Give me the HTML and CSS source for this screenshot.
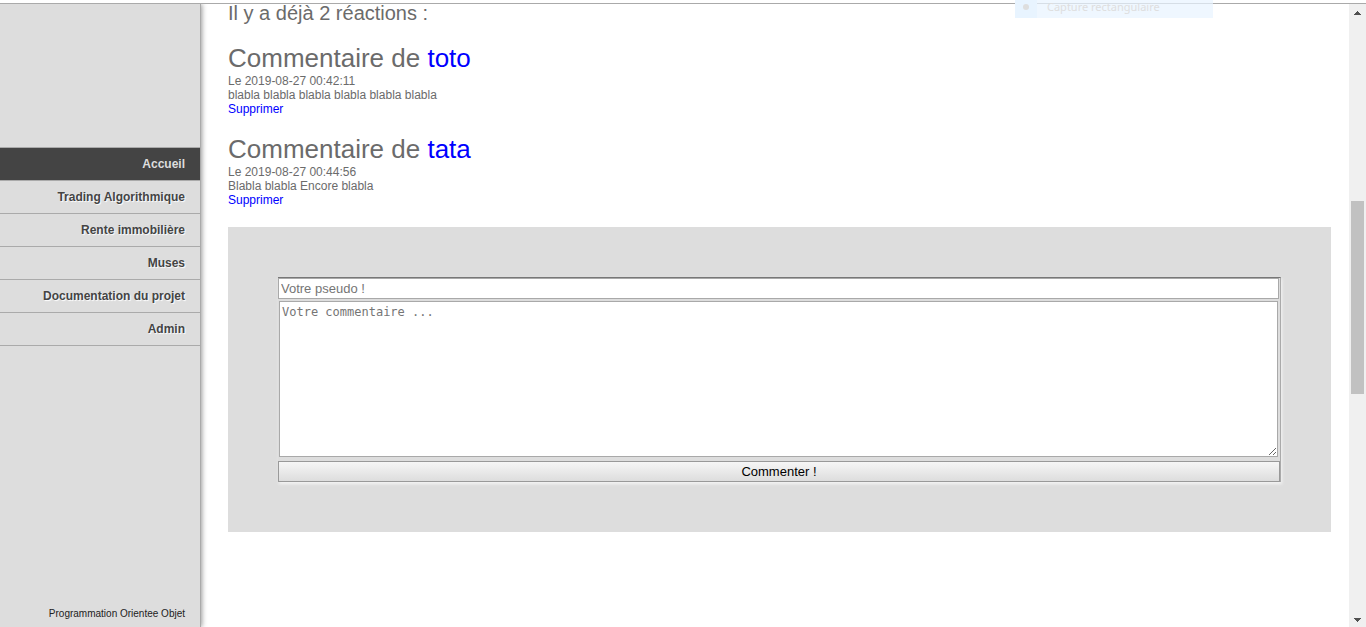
FILE: index.html
```html
<!DOCTYPE html>
<html lang="fr">
<head>
<meta charset="utf-8">
<title>Programmation Orientee Objet</title>
<link rel="stylesheet" href="styles.css">
</head>
<body>
<div class="top-line"></div>
<div class="page">
  <aside class="sidebar">
    <nav class="menu">
      <a class="menu-item active" href="#accueil">Accueil</a>
      <a class="menu-item" href="#trading">Trading Algorithmique</a>
      <a class="menu-item" href="#rente">Rente immobilière</a>
      <a class="menu-item" href="#muses">Muses</a>
      <a class="menu-item" href="#documentation">Documentation du projet</a>
      <a class="menu-item" href="#admin">Admin</a>
    </nav>
    <p class="sidebar-footer">Programmation Orientee Objet</p>
  </aside>
  <main class="content">
    <h2 class="count">Il y a déjà 2 réactions :</h2>
    <article class="comment">
      <h3 class="comment-title">Commentaire de <a href="#toto">toto</a></h3>
      <p>Le 2019-08-27 00:42:11</p>
      <p>blabla blabla blabla blabla blabla blabla</p>
      <p><a href="#supprimer-1">Supprimer</a></p>
    </article>
    <article class="comment">
      <h3 class="comment-title">Commentaire de <a href="#tata">tata</a></h3>
      <p>Le 2019-08-27 00:44:56</p>
      <p>Blabla blabla Encore blabla</p>
      <p><a href="#supprimer-2">Supprimer</a></p>
    </article>
    <section class="form-panel">
      <form class="comment-form">
        <input class="pseudo" type="text" placeholder="Votre pseudo !" aria-label="Votre pseudo">
        <textarea class="message" placeholder="Votre commentaire ..." aria-label="Votre commentaire"></textarea>
        <button class="submit" type="button">Commenter !</button>
      </form>
    </section>
  </main>
  <div class="scrollbar">
    <svg class="arrow" viewBox="0 0 17 17" shape-rendering="crispEdges"><path d="M8 7h1v1h1v1h1v1h1v1H5v-1h1V9h1V8h1z"/></svg>
    <div class="track"><div class="thumb"></div></div>
    <svg class="arrow" viewBox="0 0 17 17" shape-rendering="crispEdges"><path d="M5 8h7v1h-1v1h-1v1H9v1H8v-1H7v-1H6V9H5z"/></svg>
  </div>
</div>
<div class="capture-hint"><span class="capture-icon"><span class="dot"></span></span><span class="capture-label">Capture rectangulaire</span></div>
</body>
</html>
```
FILE: styles.css
```css
* {
  box-sizing: border-box;
}

body {
  margin: 0;
  height: 100vh;
  display: flex;
  flex-direction: column;
  overflow: hidden;
  background: #fff;
  color: #6b6b6b;
  font: 12px/14px "Liberation Sans", Arial, sans-serif;
}

h2, h3, p {
  margin: 0;
  font-weight: normal;
}

a {
  color: #00f;
  text-decoration: none;
}

.top-line {
  flex: none;
  height: 4px;
  border-bottom: 1px solid #aaa;
}

.page {
  flex: 1;
  min-height: 0;
  display: flex;
  overflow: hidden;
}

.sidebar {
  flex: none;
  width: 201px;
  padding-top: 143px;
  display: flex;
  flex-direction: column;
  justify-content: space-between;
  background: #ddd;
  border-right: 1px solid #aaa;
  box-shadow: 1px 0 5px #999;
}

.menu {
  border-top: 1px solid #aaa;
}

.menu-item {
  display: block;
  padding: 9px 15px;
  border-bottom: 1px solid #aaa;
  color: #444;
  font-weight: bold;
  text-align: right;
  text-shadow: 1px 1px 1px #fff;
}

.menu-item.active {
  background: #444;
  color: #ddd;
  text-shadow: none;
}

.sidebar-footer {
  padding: 0 15px 6px;
  color: #222;
  font-size: 10px;
  text-align: right;
}

.content {
  flex: 1;
  min-width: 0;
  padding: 0 18px 0 27px;
}

.count {
  margin-bottom: 23px;
  font-size: 20px;
  line-height: 18px;
}

.comment {
  margin-bottom: 20px;
}

.comment-title {
  margin-bottom: 2px;
  font-size: 26px;
  line-height: 27px;
}

.form-panel {
  padding: 50px;
  background: #ddd;
}

.comment-form {
  display: flex;
  flex-direction: column;
  border-top: 1px solid #777;
  border-right: 1px solid #aaa;
  box-shadow: 1px 2px 3px #f4f4f4;
}

.pseudo, .message {
  border: 1px solid #a9a9a9;
  border-radius: 0;
  background: #fff;
  outline: none;
}

.pseudo {
  height: 21px;
  margin-right: 1px;
  padding: 1px 2px;
  font: 13px "Liberation Sans", Arial, sans-serif;
}

.message {
  height: 156px;
  margin: 2px 2px 4px 1px;
  padding: 3px 2px;
  font: 12px/14px "DejaVu Sans Mono", monospace;
  resize: vertical;
}

.pseudo::placeholder, .message::placeholder {
  color: #757575;
}

.submit {
  height: 21px;
  padding: 0;
  border: 1px solid #999;
  border-radius: 0;
  background: linear-gradient(#f6f6f6, #ddd);
  color: #000;
  font: 13px "Liberation Sans", Arial, sans-serif;
}

.scrollbar {
  flex: none;
  width: 17px;
  display: flex;
  flex-direction: column;
  background: #f0f0f0;
}

.arrow {
  flex: none;
  width: 17px;
  height: 17px;
  fill: #505050;
}

.track {
  flex: 1;
  display: grid;
  grid-template-rows: 180fr 193fr 216fr;
}

.thumb {
  grid-row: 2;
  margin: 0 2px;
  background: #c1c1c1;
}

.capture-hint {
  position: absolute;
  top: 0;
  right: 153px;
  width: 198px;
  height: 18px;
  display: flex;
  align-items: center;
  background: rgba(232, 244, 255, 0.7);
  color: #dedede;
  font: 11px/14px "Noto Sans", sans-serif;
  pointer-events: none;
}

.capture-icon {
  width: 22px;
  height: 18px;
  display: flex;
  align-items: center;
  justify-content: center;
  background: #e8f4ff;
}

.capture-label {
  padding: 0 0 4px 10px;
}

.dot {
  width: 6px;
  height: 6px;
  margin-bottom: 4px;
  border-radius: 50%;
  background: #dedede;
}
```
